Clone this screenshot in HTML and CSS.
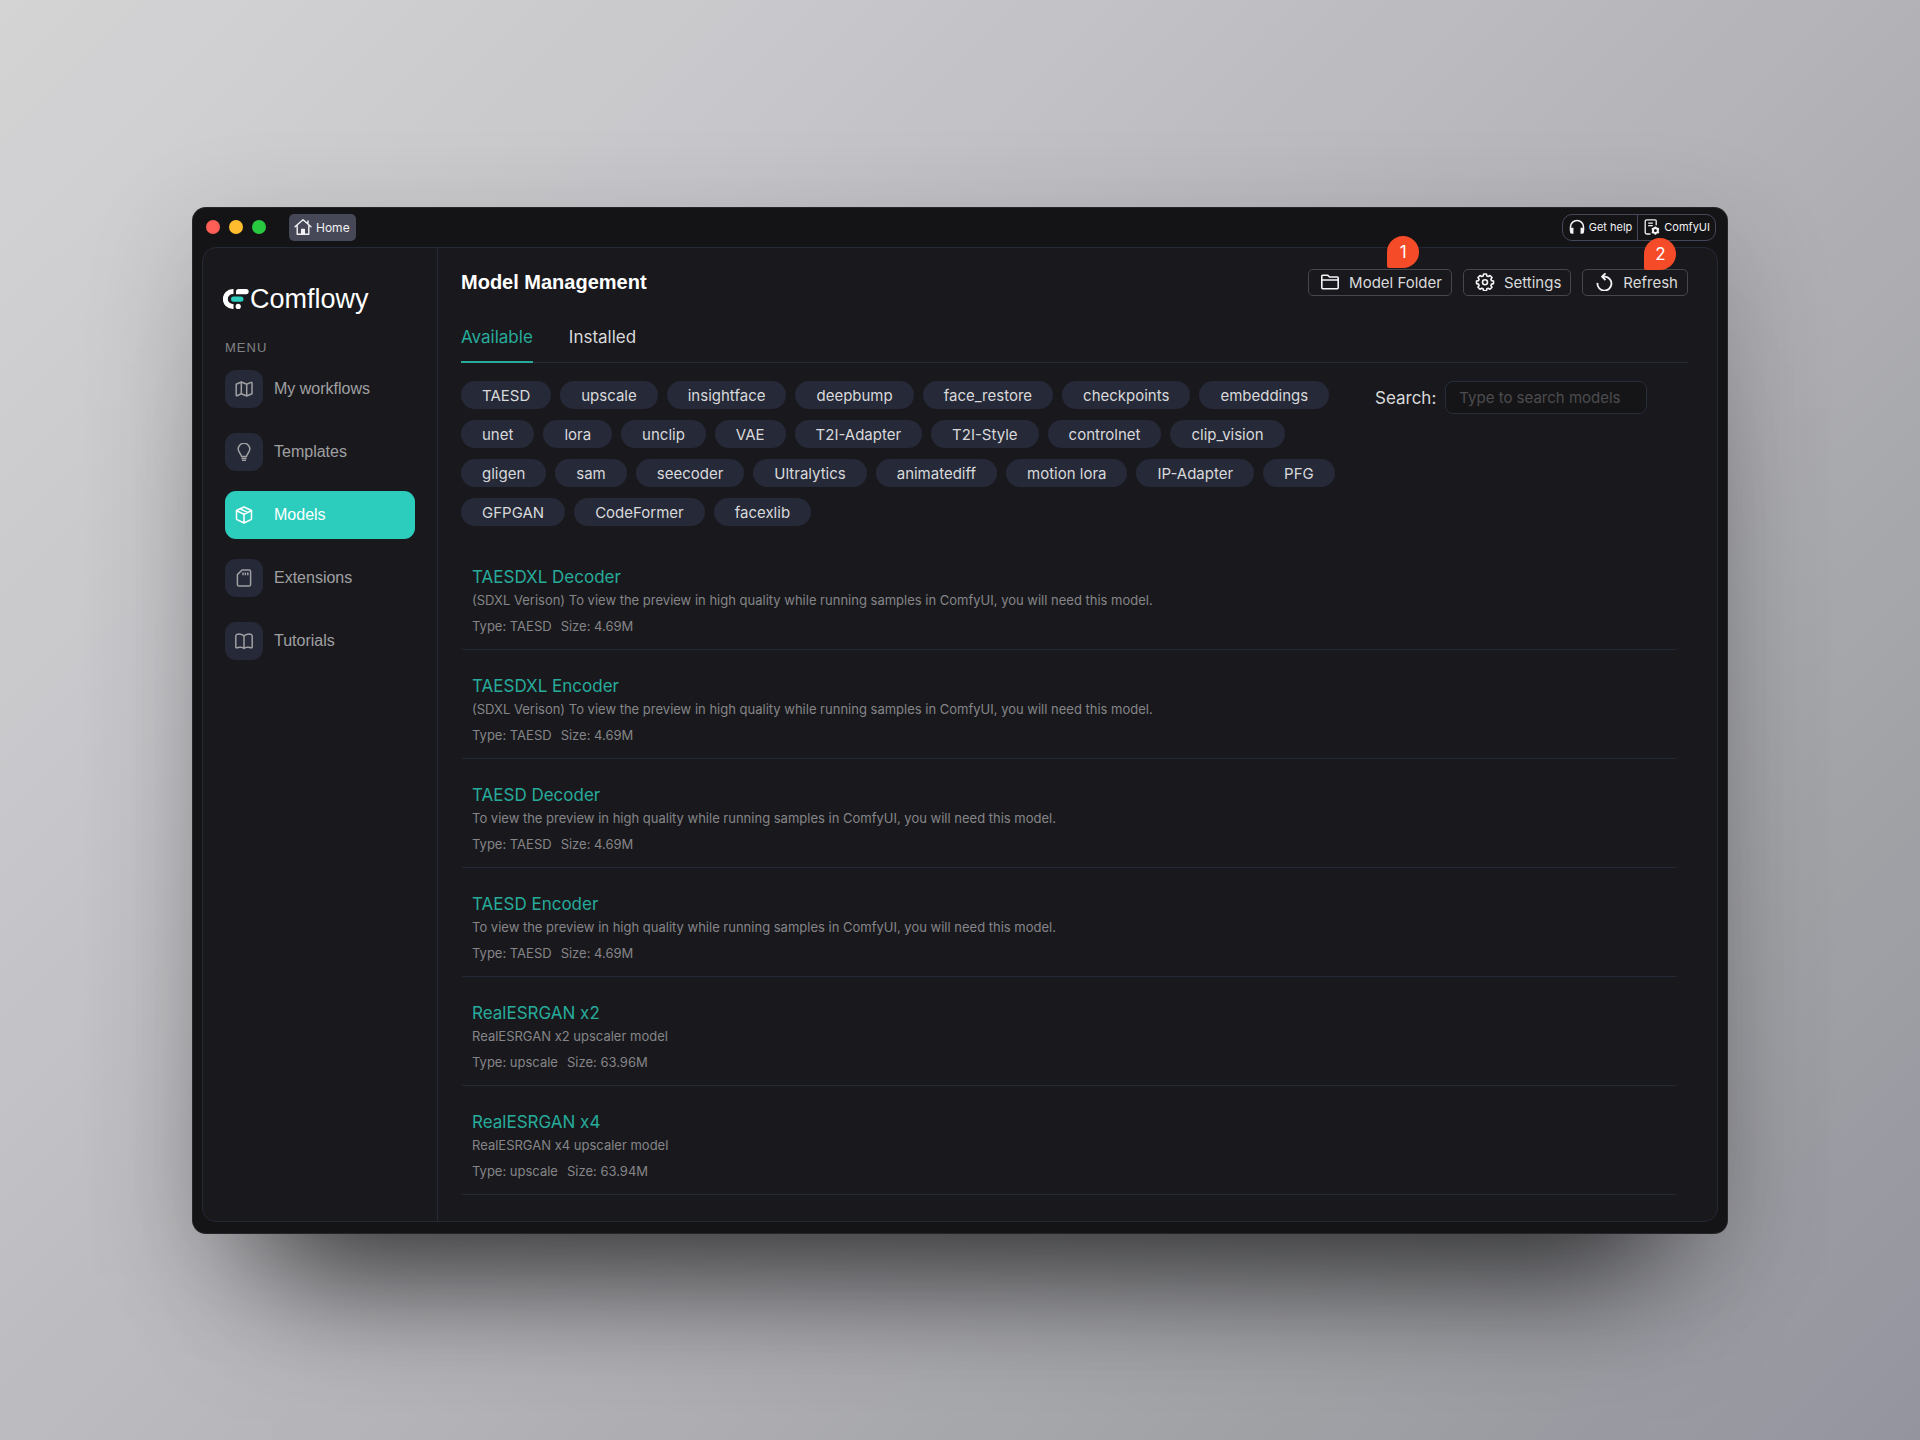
FILE: index.html
```html
<!DOCTYPE html>
<html lang="en">
<head>
<meta charset="utf-8">
<title>Comflowy – Model Management</title>
<link rel="stylesheet" href="styles.css">
</head>
<body>
<div class="window">
  <header class="titlebar">
    <div class="lights"><span class="light light-close"></span><span class="light light-min"></span><span class="light light-max"></span></div>
    <button class="home" type="button">
      <svg width="18" height="18" viewBox="0 0 18 18" fill="none" stroke="currentColor" stroke-width="1.4" stroke-linejoin="round" stroke-linecap="round"><path d="M1 8.8 9 1.8l8 7M3.2 7.5v8.7h11.6V7.5M14 5.6V3"/><path d="M7.7 16v-4.6h2.6V16" fill="currentColor"/></svg>
      Home
    </button>
    <div class="help-group">
      <button type="button">
        <svg width="16" height="16" viewBox="0 0 16 16" fill="none" stroke="currentColor" stroke-width="1.5"><path d="M1.5 11.500V8a6.500 6.500 0 0 1 13 0v3.500"/><path d="M1.700 9.500h2v4.500h-1a1 1 0 0 1-1-1zM14.300 9.500h-2v4.500h1a1 1 0 0 0 1-1z" fill="currentColor"/></svg>
        Get help
      </button>
      <button type="button">
        <svg width="16" height="16" viewBox="0 0 16 16" fill="none" stroke="currentColor" stroke-width="1.3"><path d="M6.5 15H2.8a1.6 1.6 0 0 1-1.6-1.6V2.4A1.6 1.6 0 0 1 2.8.8h8.400a1 1 0 0 1 1 1v4.400M4.2 4.2h4.6M4.2 6.6h4.6"/><circle cx="11.4" cy="11.6" r="2.5" stroke-width="2"/><path stroke-width="1.6" d="M11.4 7.4v1.4M11.4 14.4v1.4M7.8 9.5l1.2.7M13.8 13l1.2.7M15 9.5l-1.2.7M9 13l-1.2.7"/></svg>
        ComfyUI
      </button>
    </div>
  </header>
  <div class="panel">
    <aside class="sidebar">
      <div class="brand">
        <svg width="26" height="20" viewBox="0 0 26 20"><path d="M10.5 0v5H9.8a5 5 0 0 0 0 10h.7v5H9.8a10 10 0 0 1 0-20z" fill="#fff"/><path d="M13 5.200V2.600A2.600 2.600 0 0 1 15.600 0h7.500a2.600 2.600 0 0 1 0 5.200z" fill="#fff"/><rect x="8" y="7.500" width="12.500" height="5.200" rx="2.600" fill="#2ccdbd"/><circle cx="15.200" cy="17.400" r="2.600" fill="#fff"/></svg>
        <span>Comflowy</span>
      </div>
      <p class="menu-title">MENU</p>
      <nav class="menu">
        <a href="#workflows"><span class="tile"><svg viewBox="0 0 18 18"><path d="M1.200 4.200 6.300 2l5.400 2.200 4.300-1.800a.7.7 0 0 1 1 .6v10.800L11.700 16l-5.400-2.200-4.200 1.900a.7.7 0 0 1-.9-.7zM6.300 2v11.800M11.700 4.200V16"/></svg></span>My workflows</a>
        <a href="#templates"><span class="tile"><svg viewBox="0 0 18 18"><path d="M6.500 13.500c0-2.600-3.300-3.800-3.300-7.400a5.800 5.800 0 0 1 11.600 0c0 3.600-3.300 4.800-3.300 7.400zM6.500 15.500h5M7 17.500h4"/></svg></span>Templates</a>
        <a href="#models" class="active" aria-current="page"><span class="tile"><svg viewBox="0 0 18 18"><path d="M9 1l7.500 3.500v8.800L9 17l-7.500-3.700V4.500zM1.700 4.700 9 8.200l7.300-3.500M9 8.200V17M5.200 2.900l7.300 3.500"/></svg></span>Models</a>
        <a href="#extensions"><span class="tile"><svg viewBox="0 0 18 18"><path d="M7 1h7a1.600 1.600 0 0 1 1.600 1.600v12.800A1.600 1.600 0 0 1 14 17H4a1.600 1.600 0 0 1-1.600-1.600V5.600zM8 3.600v2.700M10.400 3.600v2.700M12.800 3.600v2.700"/></svg></span>Extensions</a>
        <a href="#tutorials"><span class="tile"><svg viewBox="0 0 18 18"><path d="M9 4C7.500 2 3.500 1.500 1.600 2.600 1 3 .8 3.200.8 4v11c0 .8.500 1 1.200.7C4 14.800 7.500 15 9 16.500c1.500-1.500 5-1.700 7-.8.700.3 1.200.1 1.200-.7V4c0-.8-.2-1-.8-1.400C14.500 1.500 10.500 2 9 4zv12.500"/></svg></span>Tutorials</a>
      </nav>
    </aside>
    <main class="main">
      <div class="heading">
        <h1>Model Management</h1>
        <div class="actions">
          <button type="button">
            <span class="pin pin-folder">1</span>
            <svg width="20" height="18" viewBox="0 0 20 18"><path d="M1.800 3.200v11.600a1 1 0 0 0 1 1h14.400a1 1 0 0 0 1-1V5a1 1 0 0 0-1-1H9.500L7.800 2.200H2.800a1 1 0 0 0-1 1zM1.800 7h16.400"/></svg>
            <span>Model Folder</span>
          </button>
          <button type="button">
            <svg width="20" height="18" viewBox="-1 0 20 18"><path d="M7.600 1h2.800l.5 2 1.300.5 1.800-1 2 2-1.100 1.700.6 1.400 2 .4v2.600l-2 .5-.6 1.400 1.100 1.700-2 2-1.800-1-1.300.5-.5 2H7.600l-.5-2-1.300-.5-1.800 1-2-2 1.100-1.700-.6-1.400-2-.5V8l2-.4.600-1.400L2 4.500l2-2 1.800 1L7.100 3z"/><circle cx="9" cy="9.300" r="2.500"/></svg>
            <span>Settings</span>
          </button>
          <button type="button">
            <span class="pin pin-refresh">2</span>
            <svg width="20" height="18" viewBox="-2 0 20 18"><path d="M1.500 9.800A7 7 0 1 0 9 3.600H6.200M9.500.3 6 3.600 9.500 7" stroke-width="1.800"/></svg>
            <span>Refresh</span>
          </button>
        </div>
      </div>
      <div class="tabs" role="tablist">
        <button type="button" role="tab" aria-selected="true">Available</button>
        <button type="button" role="tab" aria-selected="false">Installed</button>
      </div>
      <div class="filters">
        <div class="chips">
          <button type="button">TAESD</button><button type="button">upscale</button><button type="button">insightface</button><button type="button">deepbump</button><button type="button">face_restore</button><button type="button">checkpoints</button><button type="button">embeddings</button>
          <button type="button">unet</button><button type="button">lora</button><button type="button">unclip</button><button type="button">VAE</button><button type="button">T2I-Adapter</button><button type="button">T2I-Style</button><button type="button">controlnet</button><button type="button">clip_vision</button>
          <button type="button">gligen</button><button type="button">sam</button><button type="button">seecoder</button><button type="button">Ultralytics</button><button type="button">animatediff</button><button type="button">motion lora</button><button type="button">IP-Adapter</button><button type="button">PFG</button>
          <button type="button">GFPGAN</button><button type="button">CodeFormer</button><button type="button">facexlib</button>
        </div>
        <div class="search">
          <label for="search">Search:</label>
          <input id="search" type="text" placeholder="Type to search models">
        </div>
      </div>
      <ul class="models">
        <li><h2>TAESDXL Decoder</h2><p class="desc">(SDXL Verison) To view the preview in high quality while running samples in ComfyUI, you will need this model.</p><p class="meta"><span>Type: TAESD</span><span>Size: 4.69M</span></p></li>
        <li><h2>TAESDXL Encoder</h2><p class="desc">(SDXL Verison) To view the preview in high quality while running samples in ComfyUI, you will need this model.</p><p class="meta"><span>Type: TAESD</span><span>Size: 4.69M</span></p></li>
        <li><h2>TAESD Decoder</h2><p class="desc">To view the preview in high quality while running samples in ComfyUI, you will need this model.</p><p class="meta"><span>Type: TAESD</span><span>Size: 4.69M</span></p></li>
        <li><h2>TAESD Encoder</h2><p class="desc">To view the preview in high quality while running samples in ComfyUI, you will need this model.</p><p class="meta"><span>Type: TAESD</span><span>Size: 4.69M</span></p></li>
        <li><h2>RealESRGAN x2</h2><p class="desc">RealESRGAN x2 upscaler model</p><p class="meta"><span>Type: upscale</span><span>Size: 63.96M</span></p></li>
        <li><h2>RealESRGAN x4</h2><p class="desc">RealESRGAN x4 upscaler model</p><p class="meta"><span>Type: upscale</span><span>Size: 63.94M</span></p></li>
      </ul>
    </main>
  </div>
</div>
</body>
</html>
```
FILE: styles.css
```css
* {
  box-sizing: border-box;
}

body {
  margin: 0;
  min-height: 100vh;
  padding: 207px 10%;
  background: linear-gradient(135deg, #d4d4d5 0%, #c6c6ca 27%, #b3b3b8 55%, #a1a2a6 80%, #94949f 100%);
  font-family: Inter, "Noto Sans", sans-serif;
  color: #d9d9db;
}

h1, h2, p, ul {
  margin: 0;
  padding: 0;
}

button {
  margin: 0;
  font-family: inherit;
  color: inherit;
  background: none;
  border: 0;
}

.window {
  background: #141416;
  border-radius: 14px;
  padding: 0 10px 12px;
  box-shadow: inset 0 0 0 1px rgba(255, 255, 255, 0.08), 0 120px 120px -80px rgba(0, 0, 0, 0.65), 0 30px 110px rgba(0, 0, 0, 0.18);
}

/* Title bar */
.titlebar {
  display: flex;
  align-items: center;
  height: 40px;
  padding: 0 2px 0 4px;
}

.lights {
  display: flex;
  gap: 9px;
}

.light {
  width: 14px;
  height: 14px;
  border-radius: 50%;
}

.light-close { background: #ff5f57; }
.light-min { background: #febc2e; }
.light-max { background: #28c840; }

.home {
  display: flex;
  align-items: center;
  gap: 4px;
  height: 27px;
  margin-left: 23px;
  padding: 0 6px 0 5px;
  border-radius: 5px;
  background: #464757;
  color: #f2f2f4;
  font-size: 12px;
}

.help-group {
  display: flex;
  height: 27px;
  margin-left: auto;
  border: 1px solid #45465a;
  border-radius: 10px;
}

.help-group button {
  display: flex;
  align-items: center;
  gap: 4px;
  padding: 0 5px 0 6px;
  font-size: 11px;
  color: #f2f2f4;
}

.help-group button + button {
  border-left: 1px solid #45465a;
}

/* Panel */
.panel {
  display: flex;
  background: #19191d;
  border: 1px solid #242936;
  border-radius: 14px;
}

.sidebar {
  flex: none;
  width: 235px;
  border-right: 1px solid #242936;
  font-family: "Liberation Sans", Arial, sans-serif;
}

.brand {
  display: flex;
  align-items: center;
  gap: 1px;
  height: 34px;
  margin-top: 34px;
  padding-left: 20px;
  color: #fff;
  font-size: 27px;
}

.menu-title {
  margin: 24px 22px 9px;
  font-size: 13px;
  line-height: 16px;
  letter-spacing: 1px;
  color: #828285;
}

.menu {
  display: flex;
  flex-direction: column;
  gap: 15px;
  padding: 0 22px;
}

.menu a {
  display: flex;
  align-items: center;
  gap: 11px;
  height: 48px;
  border-radius: 11px;
  color: #a0a0a3;
  font-size: 16px;
  text-decoration: none;
}

.menu a.active {
  background: #2ccdbd;
  color: #fff;
}

.tile {
  display: grid;
  place-items: center;
  width: 38px;
  height: 38px;
  border-radius: 11px;
  background: #252938;
}

.active .tile {
  background: none;
}

.tile svg {
  width: 18px;
  height: 18px;
  fill: none;
  stroke: currentColor;
  stroke-width: 1.5;
  stroke-linejoin: round;
}

.main {
  flex: 1;
  min-width: 0;
  padding: 20px 29px 26px 23px;
}

.heading {
  display: flex;
  align-items: center;
  justify-content: space-between;
}

h1 {
  font: bold 20px/28px "Liberation Sans", Arial, sans-serif;
  color: #fff;
}

.actions {
  display: flex;
  gap: 11px;
}

.actions button {
  position: relative;
  display: flex;
  align-items: center;
  gap: 9px;
  height: 27px;
  padding: 0 9px 0 11px;
  border: 1px solid #47474b;
  border-radius: 5px;
  font-size: 15px;
}

.actions svg {
  fill: none;
  stroke: #f4f4f5;
  stroke-width: 1.6;
  stroke-linejoin: round;
}

.pin {
  position: absolute;
  width: 32px;
  height: 32px;
  border-radius: 50% 50% 50% 2px;
  background: #f64b28;
  color: #fff;
  font-size: 17px;
  line-height: 32px;
  text-align: center;
}

.pin-folder {
  top: -34px;
  left: 78px;
}

.pin-refresh {
  top: -32px;
  left: 61px;
}

.tabs {
  display: flex;
  gap: 36px;
  margin-top: 14px;
  box-shadow: inset 0 -1px #242936;
}

.tabs button {
  padding: 16px 0 13px;
  border-bottom: 2px solid transparent;
  font-size: 17px;
  line-height: 22px;
}

.tabs [aria-selected="true"] {
  color: #27ab9b;
  border-color: #27ab9b;
}

.filters {
  display: flex;
  align-items: flex-start;
  margin-top: 18px;
}

.chips {
  flex: 0 1 914px;
  display: flex;
  flex-wrap: wrap;
  gap: 11px 9px;
  padding-right: 20px;
}

.chips button {
  height: 28px;
  padding: 0 21px;
  border-radius: 14px;
  background: #252938;
  font-size: 15px;
}

.search {
  display: flex;
  align-items: center;
  gap: 9px;
  font-size: 17px;
}

.search input {
  width: 202px;
  height: 33px;
  padding: 0 13px;
  border: 1px solid #272c3d;
  border-radius: 8px;
  background: #151517;
  color: #d9d9db;
  font: 15px Inter, "Noto Sans", sans-serif;
}

.search input::placeholder {
  color: #4c4c4f;
}

.models {
  list-style: none;
  margin: 15px 10px 0 0;
}

.models li {
  padding: 24px 11px 13px;
  border-bottom: 1px solid #242936;
  border-radius: 3px;
}

h2 {
  font-size: 17px;
  font-weight: 400;
  line-height: 24px;
  color: #27ab9b;
}

.desc, .meta {
  font-size: 13px;
  line-height: 20px;
  color: #858588;
}

.desc {
  margin: 1px 0 6px;
}

.meta {
  display: flex;
  gap: 9px;
}
```
